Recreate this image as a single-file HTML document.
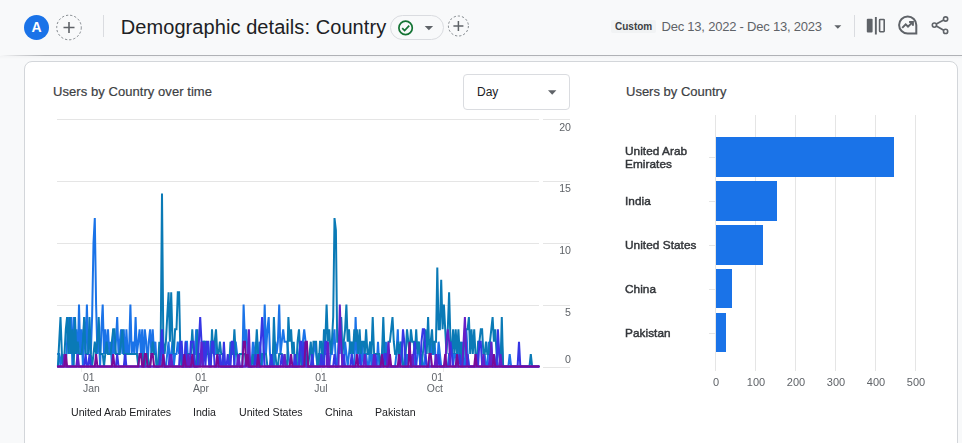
<!DOCTYPE html>
<html lang="en">
<head>
<meta charset="utf-8">
<title>Demographic details: Country</title>
<style>
html,body{margin:0;padding:0;}
body{width:962px;height:443px;overflow:hidden;background:#f8f9fa;font-family:"Liberation Sans",sans-serif;position:relative;color:#202124;}
.abs{position:absolute;white-space:nowrap;}
#hdr{position:absolute;left:0;top:0;width:962px;height:55px;background:#f8f9fa;}
#hdrline{position:absolute;left:0;top:55px;width:962px;height:1px;background:linear-gradient(to right,rgba(176,178,182,0) 0px,rgba(176,178,182,0.5) 20px,rgba(176,178,182,1) 45px);}
#hdrshadow{position:absolute;left:0;top:56px;width:962px;height:3px;background:linear-gradient(to bottom,rgba(60,64,67,0.03),rgba(60,64,67,0));}
#card{position:absolute;left:24px;top:61px;width:932px;height:420px;background:#fff;border:1px solid #d3d6da;border-radius:8px;}
#avatar{left:24px;top:15px;width:25px;height:25px;border-radius:50%;background:#1a73e8;color:#fff;font-weight:bold;font-size:14px;line-height:25px;text-align:center;}
.vdiv{position:absolute;width:1px;background:#dadce0;}
#title{left:120.8px;top:15px;font-size:20px;line-height:24px;color:#202124;letter-spacing:0.07px;}
#pill{left:390px;top:15px;width:52px;height:23px;border:1px solid #dadce0;border-radius:13px;}
#chip{left:611px;top:20px;width:45px;height:13px;background:#f1f3f4;border-radius:2px;}
#chiptxt{left:615px;top:20px;font-size:10px;line-height:13px;font-weight:bold;color:#3c4043;letter-spacing:0;}
#daterange{left:661.5px;top:18px;font-size:13px;line-height:18px;color:#5f6368;letter-spacing:-0.22px;}
.ctitle{font-size:13px;line-height:16px;color:#3c4043;-webkit-text-stroke:0.2px #3c4043;}
#ct1{left:53px;top:84px;letter-spacing:0.06px;}
#ct2{left:626px;top:84px;}
#dd{left:463px;top:74px;width:105px;height:34px;border:1px solid #dadce0;border-radius:4px;background:#fff;}
#ddtxt{left:477px;top:84px;font-size:12px;line-height:16px;color:#202124;}
.ylab{position:absolute;font-size:10.6px;line-height:12px;color:#5f6368;text-align:right;width:30px;left:540.7px;}
.xlab{position:absolute;font-size:10.4px;line-height:11.2px;color:#5f6368;white-space:nowrap;width:40px;}
.leg{position:absolute;font-size:10.6px;line-height:13px;color:#202124;top:406px;white-space:nowrap;}
.blab{position:absolute;font-size:11.8px;line-height:13px;font-weight:normal;-webkit-text-stroke:0.45px #33363a;letter-spacing:0.05px;color:#33363a;left:625.4px;white-space:nowrap;}
.bx{position:absolute;font-size:11px;line-height:12px;color:#5f6368;top:376px;width:40px;text-align:center;}
svg{position:absolute;left:0;top:0;overflow:visible;}
.ylab,.xlab,.leg,.blab,.bx{will-change:transform;}
</style>
</head>
<body>
<div id="hdr"></div>
<div id="hdrline"></div>
<div id="hdrshadow"></div>
<div id="card"></div>

<!-- header -->
<div id="avatar" class="abs">A</div>
<div class="vdiv" style="left:103px;top:15px;height:22px;"></div>
<div id="title" class="abs">Demographic details: Country</div>
<div id="pill" class="abs"></div>
<div id="chip" class="abs"></div>
<div id="chiptxt" class="abs">Custom</div>
<div id="daterange" class="abs">Dec 13, 2022 - Dec 13, 2023</div>
<div class="vdiv" style="left:854px;top:15px;height:22px;"></div>

<svg id="icons" width="962" height="60" viewBox="0 0 962 60">
  <!-- dashed plus 1 -->
  <circle cx="69" cy="27.5" r="12.3" fill="none" stroke="#80868b" stroke-width="1" stroke-dasharray="2.2 2"/>
  <path d="M63.5 27.5h11M69 22v11" stroke="#5f6368" stroke-width="1.6" fill="none"/>
  <!-- check -->
  <circle cx="405.6" cy="27.9" r="6.7" fill="none" stroke="#137333" stroke-width="1.7"/>
  <path d="M402.2 28.1l2.4 2.4l4.6-4.8" stroke="#137333" stroke-width="1.7" fill="none"/>
  <path d="M424.7 26h8.4l-4.2 4.2z" fill="#5f6368"/>
  <!-- dashed plus 2 -->
  <circle cx="458.4" cy="26" r="10" fill="none" stroke="#80868b" stroke-width="1" stroke-dasharray="2.2 2"/>
  <path d="M453.4 26h10M458.4 21v10" stroke="#5f6368" stroke-width="1.5" fill="none"/>
  <!-- date arrow -->
  <path d="M834.3 25.3h7l-3.5 3.5z" fill="#5f6368"/>
  <!-- compare icon -->
  <rect x="866.8" y="18.7" width="5.8" height="13.8" rx="1" fill="#5f6368"/>
  <rect x="874.9" y="17" width="1.9" height="17.5" fill="#5f6368"/>
  <rect x="879.6" y="19.5" width="4.6" height="12.2" rx="0.6" fill="none" stroke="#5f6368" stroke-width="1.6"/>
  <!-- insights icon -->
  <path d="M907.7 16.4a8.6 8.6 0 1 0 0 17.2h8.6v-8.6a8.6 8.6 0 0 0-8.6-8.6z" fill="none" stroke="#5f6368" stroke-width="2"/>
  <path d="M902.2 27.9l3.5-3.5l2.3 2.3l4.6-4.6M909.1 21.9h3.8v3.8" fill="none" stroke="#5f6368" stroke-width="2"/>
  <!-- share icon -->
  <path d="M936.3 24.1l7.4-4M936.3 26.1l7.4 4.2" stroke="#5f6368" stroke-width="1.7" fill="none"/>
  <circle cx="934.4" cy="25.1" r="2.1" fill="none" stroke="#5f6368" stroke-width="1.6"/>
  <circle cx="945.6" cy="19" r="2.1" fill="none" stroke="#5f6368" stroke-width="1.6"/>
  <circle cx="945.6" cy="31.4" r="2.1" fill="none" stroke="#5f6368" stroke-width="1.6"/>
</svg>

<!-- left card content -->
<div id="ct1" class="abs ctitle">Users by Country over time</div>
<div id="dd" class="abs"></div>
<div id="ddtxt" class="abs">Day</div>

<svg id="chart" width="962" height="443" viewBox="0 0 962 443">
  <path d="M548 90.3h8.4l-4.2 4.4z" fill="#5f6368"/>
  <g stroke="#e5e5e5" stroke-width="1" fill="none">
    <path d="M57 119.5H539M543 119.5H570"/>
    <path d="M57 181.5H539M543 181.5H570"/>
    <path d="M57 243.5H539M543 243.5H570"/>
    <path d="M57 305.5H539M543 305.5H570"/>
    <path d="M57 367.5H539M543 367.5H570"/>
    <path d="M81.5 368V372M201.5 368V372M321.5 368V372M443.5 368V372" stroke="#ececec"/>
  </g>
  <g id="series" fill="none" stroke-width="2" stroke-linejoin="miter" stroke-linecap="round">
    <path stroke="#1a73e8" d="M57.9 354.0L59.2 354.0L60.5 366.4L61.9 354.0L63.2 366.4L64.5 354.0L65.8 366.4L67.1 341.7L68.4 317.0L69.8 354.0L71.1 317.0L72.4 366.4L73.7 317.0L75.0 354.0L76.3 329.3L77.7 366.4L79.0 304.6L80.3 354.0L81.6 329.3L82.9 366.4L84.2 317.0L85.6 354.0L86.9 304.6L88.2 354.0L89.5 329.3L90.8 354.0L92.1 317.0L93.5 242.8L94.8 218.1L96.1 304.6L97.4 354.0L98.7 329.3L100.1 366.4L101.4 329.3L102.7 304.6L104.0 354.0L105.3 329.3L106.6 354.0L108.0 329.3L109.3 354.0L110.6 341.7L111.9 366.4L113.2 329.3L114.5 354.0L115.9 341.7L117.2 317.0L118.5 354.0L119.8 341.7L121.1 329.3L122.4 354.0L123.8 329.3L125.1 366.4L126.4 329.3L127.7 354.0L129.0 354.0L130.4 304.6L131.7 354.0L133.0 341.7L134.3 354.0L135.6 317.0L136.9 354.0L138.3 341.7L139.6 329.3L140.9 354.0L142.2 329.3L143.5 366.4L144.8 329.3L146.2 341.7L147.5 366.4L148.8 341.7L150.1 329.3L151.4 354.0L152.7 329.3L154.1 354.0L155.4 341.7L156.7 366.4L158.0 366.4L159.3 354.0L160.6 366.4L162.0 341.7L163.3 366.4L164.6 366.4L165.9 366.4L167.2 354.0L168.6 341.7L169.9 366.4L171.2 354.0L172.5 341.7L173.8 366.4L175.1 354.0L176.5 354.0L177.8 341.7L179.1 354.0L180.4 341.7L181.7 366.4L183.0 354.0L184.4 366.4L185.7 341.7L187.0 341.7L188.3 366.4L189.6 366.4L190.9 366.4L192.3 366.4L193.6 354.0L194.9 354.0L196.2 329.3L197.5 366.4L198.9 354.0L200.2 366.4L201.5 354.0L202.8 341.7L204.1 341.7L205.4 354.0L206.8 341.7L208.1 354.0L209.4 366.4L210.7 341.7L212.0 341.7L213.3 341.7L214.7 341.7L216.0 354.0L217.3 354.0L218.6 366.4L219.9 354.0L221.2 366.4L222.6 366.4L223.9 366.4L225.2 366.4L226.5 366.4L227.8 366.4L229.1 366.4L230.5 366.4L231.8 366.4L233.1 366.4L234.4 366.4L235.7 341.7L237.1 354.0L238.4 366.4L239.7 366.4L241.0 366.4L242.3 366.4L243.6 304.6L245.0 341.7L246.3 329.3L247.6 354.0L248.9 354.0L250.2 366.4L251.5 366.4L252.9 341.7L254.2 366.4L255.5 341.7L256.8 366.4L258.1 366.4L259.4 341.7L260.8 354.0L262.1 366.4L263.4 354.0L264.7 304.6L266.0 354.0L267.4 329.3L268.7 317.0L270.0 354.0L271.3 366.4L272.6 366.4L273.9 366.4L275.3 341.7L276.6 354.0L277.9 341.7L279.2 304.6L280.5 354.0L281.8 341.7L283.2 329.3L284.5 341.7L285.8 341.7L287.1 341.7L288.4 354.0L289.7 366.4L291.1 366.4L292.4 366.4L293.7 366.4L295.0 366.4L296.3 366.4L297.6 366.4L299.0 354.0L300.3 341.7L301.6 366.4L302.9 341.7L304.2 329.3L305.6 341.7L306.9 366.4L308.2 366.4L309.5 366.4L310.8 366.4L312.1 366.4L313.5 354.0L314.8 341.7L316.1 354.0L317.4 366.4L318.7 354.0L320.0 354.0L321.4 366.4L322.7 354.0L324.0 341.7L325.3 354.0L326.6 354.0L327.9 366.4L329.3 366.4L330.6 354.0L331.9 354.0L333.2 341.7L334.5 329.3L335.9 366.4L337.2 366.4L338.5 341.7L339.8 354.0L341.1 317.0L342.4 366.4L343.8 366.4L345.1 341.7L346.4 354.0L347.7 366.4L349.0 354.0L350.3 341.7L351.7 354.0L353.0 366.4L354.3 366.4L355.6 317.0L356.9 354.0L358.2 341.7L359.6 354.0L360.9 366.4L362.2 341.7L363.5 366.4L364.8 354.0L366.1 354.0L367.5 366.4L368.8 366.4L370.1 341.7L371.4 366.4L372.7 354.0L374.1 366.4L375.4 366.4L376.7 366.4L378.0 341.7L379.3 366.4L380.6 366.4L382.0 354.0L383.3 341.7L384.6 366.4L385.9 341.7L387.2 366.4L388.5 366.4L389.9 366.4L391.2 366.4L392.5 366.4L393.8 366.4L395.1 366.4L396.4 354.0L397.8 329.3L399.1 366.4L400.4 354.0L401.7 341.7L403.0 366.4L404.3 366.4L405.7 366.4L407.0 354.0L408.3 366.4L409.6 366.4L410.9 366.4L412.3 366.4L413.6 354.0L414.9 366.4L416.2 366.4L417.5 354.0L418.8 341.7L420.2 366.4L421.5 354.0L422.8 366.4L424.1 366.4L425.4 354.0L426.7 366.4L428.1 366.4L429.4 366.4L430.7 341.7L432.0 354.0L433.3 354.0L434.6 341.7L436.0 366.4L437.3 366.4L438.6 341.7L439.9 354.0L441.2 366.4L442.6 366.4L443.9 366.4L445.2 366.4L446.5 366.4L447.8 366.4L449.1 354.0L450.5 354.0L451.8 341.7L453.1 366.4L454.4 354.0L455.7 354.0L457.0 366.4L458.4 354.0L459.7 341.7L461.0 366.4L462.3 341.7L463.6 366.4L464.9 366.4L466.3 329.3L467.6 354.0L468.9 366.4L470.2 366.4L471.5 366.4L472.8 366.4L474.2 366.4L475.5 366.4L476.8 354.0L478.1 366.4L479.4 366.4L480.8 366.4L482.1 366.4L483.4 366.4L484.7 354.0L486.0 366.4L487.3 366.4L488.7 341.7L490.0 354.0L491.3 341.7L492.6 366.4L493.9 366.4L495.2 366.4L496.6 354.0L497.9 366.4L499.2 366.4L500.5 366.4L501.8 341.7L503.1 366.4L504.5 366.4L505.8 366.4L507.1 366.4L508.4 366.4L509.7 354.0L511.1 366.4L512.4 366.4L513.7 366.4L515.0 366.4L516.3 366.4L517.6 366.4L519.0 366.4L520.3 366.4L521.6 366.4L522.9 366.4L524.2 366.4L525.5 366.4L526.9 366.4L528.2 366.4L529.5 366.4L530.8 366.4L532.1 366.4L533.4 366.4L534.8 366.4L536.1 366.4L537.4 366.4L538.7 366.4"/>
    <path stroke="#0a7ab6" d="M57.9 366.4L59.2 341.7L60.5 317.0L61.9 354.0L63.2 366.4L64.5 354.0L65.8 329.3L67.1 317.0L68.4 354.0L69.8 317.0L71.1 354.0L72.4 329.3L73.7 366.4L75.0 317.0L76.3 354.0L77.7 341.7L79.0 354.0L80.3 354.0L81.6 354.0L82.9 341.7L84.2 317.0L85.6 354.0L86.9 354.0L88.2 354.0L89.5 317.0L90.8 354.0L92.1 366.4L93.5 354.0L94.8 341.7L96.1 354.0L97.4 341.7L98.7 317.0L100.1 354.0L101.4 354.0L102.7 354.0L104.0 366.4L105.3 354.0L106.6 341.7L108.0 354.0L109.3 354.0L110.6 354.0L111.9 341.7L113.2 329.3L114.5 329.3L115.9 354.0L117.2 354.0L118.5 354.0L119.8 354.0L121.1 341.7L122.4 329.3L123.8 354.0L125.1 354.0L126.4 354.0L127.7 354.0L129.0 354.0L130.4 354.0L131.7 354.0L133.0 354.0L134.3 354.0L135.6 354.0L136.9 354.0L138.3 366.4L139.6 354.0L140.9 354.0L142.2 354.0L143.5 366.4L144.8 366.4L146.2 354.0L147.5 354.0L148.8 366.4L150.1 366.4L151.4 354.0L152.7 341.7L154.1 354.0L155.4 354.0L156.7 366.4L158.0 366.4L159.3 341.7L160.6 354.0L162.0 193.4L163.3 341.7L164.6 354.0L165.9 341.7L167.2 317.0L168.6 292.2L169.9 341.7L171.2 292.2L172.5 341.7L173.8 354.0L175.1 329.3L176.5 329.3L177.8 292.2L179.1 292.2L180.4 354.0L181.7 366.4L183.0 366.4L184.4 366.4L185.7 366.4L187.0 354.0L188.3 354.0L189.6 354.0L190.9 354.0L192.3 329.3L193.6 354.0L194.9 366.4L196.2 366.4L197.5 329.3L198.9 366.4L200.2 354.0L201.5 354.0L202.8 366.4L204.1 341.7L205.4 341.7L206.8 354.0L208.1 354.0L209.4 354.0L210.7 366.4L212.0 329.3L213.3 354.0L214.7 341.7L216.0 329.3L217.3 354.0L218.6 354.0L219.9 341.7L221.2 354.0L222.6 354.0L223.9 366.4L225.2 366.4L226.5 366.4L227.8 366.4L229.1 366.4L230.5 341.7L231.8 354.0L233.1 354.0L234.4 329.3L235.7 354.0L237.1 354.0L238.4 366.4L239.7 354.0L241.0 354.0L242.3 354.0L243.6 354.0L245.0 354.0L246.3 366.4L247.6 354.0L248.9 366.4L250.2 366.4L251.5 366.4L252.9 354.0L254.2 366.4L255.5 354.0L256.8 329.3L258.1 354.0L259.4 366.4L260.8 366.4L262.1 354.0L263.4 354.0L264.7 354.0L266.0 354.0L267.4 366.4L268.7 366.4L270.0 366.4L271.3 354.0L272.6 366.4L273.9 317.0L275.3 354.0L276.6 366.4L277.9 366.4L279.2 354.0L280.5 354.0L281.8 354.0L283.2 366.4L284.5 354.0L285.8 366.4L287.1 366.4L288.4 317.0L289.7 341.7L291.1 329.3L292.4 354.0L293.7 341.7L295.0 366.4L296.3 366.4L297.6 341.7L299.0 329.3L300.3 354.0L301.6 366.4L302.9 366.4L304.2 341.7L305.6 366.4L306.9 354.0L308.2 366.4L309.5 354.0L310.8 341.7L312.1 366.4L313.5 341.7L314.8 341.7L316.1 341.7L317.4 366.4L318.7 366.4L320.0 341.7L321.4 341.7L322.7 366.4L324.0 329.3L325.3 341.7L326.6 304.6L327.9 341.7L329.3 329.3L330.6 354.0L331.9 341.7L333.2 317.0L334.5 218.1L335.9 230.4L337.2 341.7L338.5 341.7L339.8 329.3L341.1 317.0L342.4 354.0L343.8 341.7L345.1 329.3L346.4 304.6L347.7 341.7L349.0 329.3L350.3 354.0L351.7 341.7L353.0 354.0L354.3 329.3L355.6 341.7L356.9 329.3L358.2 354.0L359.6 329.3L360.9 354.0L362.2 341.7L363.5 341.7L364.8 354.0L366.1 329.3L367.5 354.0L368.8 354.0L370.1 341.7L371.4 354.0L372.7 317.0L374.1 354.0L375.4 354.0L376.7 354.0L378.0 354.0L379.3 354.0L380.6 366.4L382.0 354.0L383.3 317.0L384.6 354.0L385.9 366.4L387.2 354.0L388.5 341.7L389.9 341.7L391.2 329.3L392.5 317.0L393.8 341.7L395.1 354.0L396.4 354.0L397.8 341.7L399.1 354.0L400.4 341.7L401.7 354.0L403.0 366.4L404.3 366.4L405.7 354.0L407.0 329.3L408.3 341.7L409.6 354.0L410.9 329.3L412.3 341.7L413.6 341.7L414.9 354.0L416.2 329.3L417.5 354.0L418.8 341.7L420.2 354.0L421.5 366.4L422.8 354.0L424.1 341.7L425.4 329.3L426.7 354.0L428.1 317.0L429.4 354.0L430.7 341.7L432.0 329.3L433.3 354.0L434.6 341.7L436.0 341.7L437.3 267.5L438.6 329.3L439.9 329.3L441.2 279.9L442.6 329.3L443.9 304.6L445.2 329.3L446.5 354.0L447.8 329.3L449.1 292.2L450.5 341.7L451.8 354.0L453.1 329.3L454.4 354.0L455.7 329.3L457.0 354.0L458.4 329.3L459.7 354.0L461.0 341.7L462.3 366.4L463.6 354.0L464.9 329.3L466.3 329.3L467.6 329.3L468.9 317.0L470.2 354.0L471.5 329.3L472.8 354.0L474.2 329.3L475.5 354.0L476.8 366.4L478.1 341.7L479.4 341.7L480.8 329.3L482.1 329.3L483.4 354.0L484.7 354.0L486.0 341.7L487.3 354.0L488.7 354.0L490.0 341.7L491.3 329.3L492.6 317.0L493.9 341.7L495.2 329.3L496.6 354.0L497.9 341.7L499.2 354.0L500.5 366.4L501.8 317.0L503.1 366.4L504.5 366.4L505.8 366.4L507.1 366.4L508.4 366.4L509.7 366.4L511.1 366.4L512.4 366.4L513.7 366.4L515.0 366.4L516.3 366.4L517.6 366.4L519.0 366.4L520.3 366.4L521.6 366.4L522.9 366.4L524.2 366.4L525.5 366.4L526.9 366.4L528.2 366.4L529.5 366.4L530.8 354.0L532.1 366.4L533.4 366.4L534.8 366.4L536.1 366.4L537.4 366.4L538.7 366.4"/>
    <path stroke="#3636e4" d="M57.9 366.4L59.2 366.4L60.5 366.4L61.9 366.4L63.2 366.4L64.5 366.4L65.8 366.4L67.1 366.4L68.4 366.4L69.8 366.4L71.1 366.4L72.4 366.4L73.7 366.4L75.0 366.4L76.3 366.4L77.7 366.4L79.0 366.4L80.3 366.4L81.6 366.4L82.9 366.4L84.2 366.4L85.6 354.0L86.9 366.4L88.2 366.4L89.5 354.0L90.8 366.4L92.1 366.4L93.5 366.4L94.8 366.4L96.1 366.4L97.4 366.4L98.7 366.4L100.1 366.4L101.4 366.4L102.7 366.4L104.0 366.4L105.3 366.4L106.6 366.4L108.0 366.4L109.3 366.4L110.6 366.4L111.9 366.4L113.2 366.4L114.5 366.4L115.9 366.4L117.2 354.0L118.5 366.4L119.8 366.4L121.1 366.4L122.4 366.4L123.8 366.4L125.1 354.0L126.4 366.4L127.7 366.4L129.0 366.4L130.4 366.4L131.7 366.4L133.0 366.4L134.3 366.4L135.6 366.4L136.9 366.4L138.3 366.4L139.6 366.4L140.9 366.4L142.2 366.4L143.5 366.4L144.8 366.4L146.2 366.4L147.5 366.4L148.8 366.4L150.1 366.4L151.4 366.4L152.7 366.4L154.1 366.4L155.4 366.4L156.7 366.4L158.0 366.4L159.3 366.4L160.6 354.0L162.0 329.3L163.3 354.0L164.6 366.4L165.9 366.4L167.2 366.4L168.6 366.4L169.9 354.0L171.2 366.4L172.5 366.4L173.8 366.4L175.1 366.4L176.5 366.4L177.8 366.4L179.1 366.4L180.4 341.7L181.7 341.7L183.0 366.4L184.4 366.4L185.7 341.7L187.0 366.4L188.3 366.4L189.6 366.4L190.9 341.7L192.3 341.7L193.6 341.7L194.9 366.4L196.2 366.4L197.5 366.4L198.9 341.7L200.2 317.0L201.5 341.7L202.8 366.4L204.1 341.7L205.4 366.4L206.8 341.7L208.1 341.7L209.4 366.4L210.7 366.4L212.0 341.7L213.3 341.7L214.7 366.4L216.0 366.4L217.3 366.4L218.6 366.4L219.9 354.0L221.2 366.4L222.6 366.4L223.9 341.7L225.2 366.4L226.5 366.4L227.8 354.0L229.1 366.4L230.5 366.4L231.8 341.7L233.1 341.7L234.4 366.4L235.7 366.4L237.1 366.4L238.4 354.0L239.7 366.4L241.0 366.4L242.3 366.4L243.6 366.4L245.0 366.4L246.3 354.0L247.6 366.4L248.9 366.4L250.2 366.4L251.5 366.4L252.9 366.4L254.2 366.4L255.5 354.0L256.8 366.4L258.1 366.4L259.4 366.4L260.8 341.7L262.1 317.0L263.4 341.7L264.7 366.4L266.0 366.4L267.4 366.4L268.7 366.4L270.0 366.4L271.3 354.0L272.6 366.4L273.9 366.4L275.3 366.4L276.6 366.4L277.9 366.4L279.2 366.4L280.5 366.4L281.8 354.0L283.2 366.4L284.5 366.4L285.8 366.4L287.1 366.4L288.4 366.4L289.7 366.4L291.1 366.4L292.4 366.4L293.7 366.4L295.0 354.0L296.3 366.4L297.6 366.4L299.0 366.4L300.3 341.7L301.6 341.7L302.9 366.4L304.2 341.7L305.6 366.4L306.9 366.4L308.2 366.4L309.5 366.4L310.8 366.4L312.1 354.0L313.5 366.4L314.8 366.4L316.1 366.4L317.4 366.4L318.7 366.4L320.0 366.4L321.4 354.0L322.7 366.4L324.0 366.4L325.3 341.7L326.6 341.7L327.9 366.4L329.3 366.4L330.6 366.4L331.9 366.4L333.2 366.4L334.5 354.0L335.9 366.4L337.2 366.4L338.5 366.4L339.8 366.4L341.1 366.4L342.4 366.4L343.8 354.0L345.1 366.4L346.4 366.4L347.7 366.4L349.0 366.4L350.3 366.4L351.7 354.0L353.0 366.4L354.3 366.4L355.6 366.4L356.9 366.4L358.2 366.4L359.6 354.0L360.9 366.4L362.2 366.4L363.5 366.4L364.8 366.4L366.1 366.4L367.5 366.4L368.8 366.4L370.1 366.4L371.4 366.4L372.7 366.4L374.1 366.4L375.4 354.0L376.7 366.4L378.0 366.4L379.3 366.4L380.6 366.4L382.0 366.4L383.3 366.4L384.6 354.0L385.9 354.0L387.2 366.4L388.5 366.4L389.9 366.4L391.2 366.4L392.5 366.4L393.8 366.4L395.1 366.4L396.4 366.4L397.8 366.4L399.1 366.4L400.4 366.4L401.7 354.0L403.0 329.3L404.3 341.7L405.7 366.4L407.0 366.4L408.3 366.4L409.6 366.4L410.9 366.4L412.3 366.4L413.6 354.0L414.9 341.7L416.2 366.4L417.5 366.4L418.8 366.4L420.2 366.4L421.5 341.7L422.8 329.3L424.1 329.3L425.4 354.0L426.7 366.4L428.1 366.4L429.4 366.4L430.7 366.4L432.0 366.4L433.3 366.4L434.6 366.4L436.0 366.4L437.3 366.4L438.6 354.0L439.9 366.4L441.2 366.4L442.6 366.4L443.9 366.4L445.2 366.4L446.5 366.4L447.8 366.4L449.1 366.4L450.5 341.7L451.8 354.0L453.1 366.4L454.4 366.4L455.7 366.4L457.0 366.4L458.4 366.4L459.7 354.0L461.0 366.4L462.3 366.4L463.6 366.4L464.9 366.4L466.3 366.4L467.6 354.0L468.9 366.4L470.2 366.4L471.5 366.4L472.8 366.4L474.2 366.4L475.5 366.4L476.8 354.0L478.1 366.4L479.4 341.7L480.8 341.7L482.1 366.4L483.4 366.4L484.7 366.4L486.0 366.4L487.3 366.4L488.7 366.4L490.0 354.0L491.3 366.4L492.6 366.4L493.9 366.4L495.2 366.4L496.6 366.4L497.9 329.3L499.2 354.0L500.5 366.4L501.8 366.4L503.1 366.4L504.5 366.4L505.8 366.4L507.1 366.4L508.4 366.4L509.7 366.4L511.1 366.4L512.4 366.4L513.7 366.4L515.0 366.4L516.3 366.4L517.6 366.4L519.0 341.7L520.3 366.4L521.6 366.4L522.9 366.4L524.2 366.4L525.5 366.4L526.9 366.4L528.2 366.4L529.5 366.4L530.8 366.4L532.1 366.4L533.4 366.4L534.8 366.4L536.1 366.4L537.4 366.4L538.7 366.4"/>
    <path stroke="#661fc8" d="M57.9 366.4L59.2 366.4L60.5 366.4L61.9 366.4L63.2 366.4L64.5 354.0L65.8 366.4L67.1 366.4L68.4 366.4L69.8 366.4L71.1 366.4L72.4 366.4L73.7 366.4L75.0 366.4L76.3 366.4L77.7 354.0L79.0 366.4L80.3 366.4L81.6 366.4L82.9 366.4L84.2 366.4L85.6 366.4L86.9 366.4L88.2 366.4L89.5 366.4L90.8 366.4L92.1 366.4L93.5 366.4L94.8 366.4L96.1 366.4L97.4 366.4L98.7 366.4L100.1 366.4L101.4 366.4L102.7 366.4L104.0 366.4L105.3 366.4L106.6 366.4L108.0 366.4L109.3 366.4L110.6 366.4L111.9 366.4L113.2 366.4L114.5 366.4L115.9 366.4L117.2 366.4L118.5 366.4L119.8 366.4L121.1 366.4L122.4 366.4L123.8 366.4L125.1 366.4L126.4 366.4L127.7 366.4L129.0 366.4L130.4 366.4L131.7 366.4L133.0 366.4L134.3 366.4L135.6 366.4L136.9 366.4L138.3 366.4L139.6 366.4L140.9 366.4L142.2 366.4L143.5 366.4L144.8 366.4L146.2 366.4L147.5 366.4L148.8 366.4L150.1 366.4L151.4 366.4L152.7 366.4L154.1 366.4L155.4 366.4L156.7 366.4L158.0 366.4L159.3 366.4L160.6 366.4L162.0 366.4L163.3 366.4L164.6 366.4L165.9 366.4L167.2 366.4L168.6 366.4L169.9 366.4L171.2 354.0L172.5 366.4L173.8 366.4L175.1 366.4L176.5 366.4L177.8 366.4L179.1 366.4L180.4 366.4L181.7 366.4L183.0 366.4L184.4 366.4L185.7 366.4L187.0 366.4L188.3 354.0L189.6 366.4L190.9 366.4L192.3 366.4L193.6 366.4L194.9 366.4L196.2 366.4L197.5 366.4L198.9 366.4L200.2 366.4L201.5 341.7L202.8 366.4L204.1 366.4L205.4 366.4L206.8 366.4L208.1 366.4L209.4 366.4L210.7 366.4L212.0 366.4L213.3 366.4L214.7 366.4L216.0 366.4L217.3 366.4L218.6 366.4L219.9 366.4L221.2 366.4L222.6 366.4L223.9 366.4L225.2 366.4L226.5 366.4L227.8 366.4L229.1 366.4L230.5 366.4L231.8 366.4L233.1 366.4L234.4 366.4L235.7 366.4L237.1 366.4L238.4 354.0L239.7 366.4L241.0 366.4L242.3 366.4L243.6 366.4L245.0 366.4L246.3 366.4L247.6 366.4L248.9 329.3L250.2 366.4L251.5 366.4L252.9 366.4L254.2 366.4L255.5 366.4L256.8 366.4L258.1 366.4L259.4 366.4L260.8 366.4L262.1 366.4L263.4 366.4L264.7 366.4L266.0 366.4L267.4 366.4L268.7 366.4L270.0 366.4L271.3 366.4L272.6 366.4L273.9 366.4L275.3 366.4L276.6 366.4L277.9 366.4L279.2 366.4L280.5 366.4L281.8 366.4L283.2 366.4L284.5 354.0L285.8 366.4L287.1 366.4L288.4 366.4L289.7 366.4L291.1 366.4L292.4 366.4L293.7 366.4L295.0 366.4L296.3 366.4L297.6 366.4L299.0 366.4L300.3 366.4L301.6 366.4L302.9 366.4L304.2 366.4L305.6 366.4L306.9 366.4L308.2 366.4L309.5 366.4L310.8 366.4L312.1 366.4L313.5 366.4L314.8 366.4L316.1 366.4L317.4 366.4L318.7 366.4L320.0 366.4L321.4 366.4L322.7 366.4L324.0 366.4L325.3 366.4L326.6 366.4L327.9 341.7L329.3 366.4L330.6 366.4L331.9 366.4L333.2 366.4L334.5 366.4L335.9 366.4L337.2 366.4L338.5 366.4L339.8 304.6L341.1 341.7L342.4 366.4L343.8 366.4L345.1 366.4L346.4 366.4L347.7 366.4L349.0 366.4L350.3 366.4L351.7 366.4L353.0 366.4L354.3 366.4L355.6 366.4L356.9 366.4L358.2 366.4L359.6 366.4L360.9 366.4L362.2 366.4L363.5 366.4L364.8 354.0L366.1 366.4L367.5 366.4L368.8 366.4L370.1 366.4L371.4 366.4L372.7 366.4L374.1 354.0L375.4 366.4L376.7 366.4L378.0 366.4L379.3 366.4L380.6 366.4L382.0 366.4L383.3 366.4L384.6 366.4L385.9 366.4L387.2 366.4L388.5 341.7L389.9 366.4L391.2 366.4L392.5 366.4L393.8 366.4L395.1 366.4L396.4 366.4L397.8 366.4L399.1 366.4L400.4 366.4L401.7 366.4L403.0 366.4L404.3 366.4L405.7 366.4L407.0 366.4L408.3 366.4L409.6 366.4L410.9 366.4L412.3 354.0L413.6 366.4L414.9 366.4L416.2 366.4L417.5 366.4L418.8 366.4L420.2 366.4L421.5 366.4L422.8 366.4L424.1 366.4L425.4 366.4L426.7 366.4L428.1 366.4L429.4 366.4L430.7 366.4L432.0 366.4L433.3 366.4L434.6 366.4L436.0 354.0L437.3 366.4L438.6 366.4L439.9 366.4L441.2 366.4L442.6 366.4L443.9 366.4L445.2 366.4L446.5 341.7L447.8 329.3L449.1 341.7L450.5 366.4L451.8 366.4L453.1 366.4L454.4 366.4L455.7 366.4L457.0 366.4L458.4 366.4L459.7 366.4L461.0 366.4L462.3 366.4L463.6 341.7L464.9 317.0L466.3 354.0L467.6 366.4L468.9 366.4L470.2 366.4L471.5 366.4L472.8 366.4L474.2 366.4L475.5 366.4L476.8 366.4L478.1 366.4L479.4 366.4L480.8 366.4L482.1 366.4L483.4 354.0L484.7 366.4L486.0 366.4L487.3 366.4L488.7 366.4L490.0 366.4L491.3 341.7L492.6 366.4L493.9 366.4L495.2 366.4L496.6 366.4L497.9 366.4L499.2 366.4L500.5 354.0L501.8 366.4L503.1 366.4L504.5 366.4L505.8 366.4L507.1 366.4L508.4 366.4L509.7 366.4L511.1 366.4L512.4 366.4L513.7 366.4L515.0 366.4L516.3 366.4L517.6 366.4L519.0 366.4L520.3 366.4L521.6 366.4L522.9 366.4L524.2 366.4L525.5 366.4L526.9 366.4L528.2 366.4L529.5 366.4L530.8 366.4L532.1 366.4L533.4 366.4L534.8 366.4L536.1 366.4L537.4 366.4L538.7 366.4"/>
    <path stroke="#7b0a96" d="M57.9 366.4L59.2 366.4L60.5 366.4L61.9 366.4L63.2 366.4L64.5 366.4L65.8 354.0L67.1 366.4L68.4 366.4L69.8 366.4L71.1 366.4L72.4 366.4L73.7 366.4L75.0 366.4L76.3 366.4L77.7 366.4L79.0 366.4L80.3 366.4L81.6 366.4L82.9 366.4L84.2 366.4L85.6 366.4L86.9 366.4L88.2 366.4L89.5 366.4L90.8 366.4L92.1 366.4L93.5 366.4L94.8 366.4L96.1 354.0L97.4 366.4L98.7 366.4L100.1 366.4L101.4 366.4L102.7 366.4L104.0 366.4L105.3 366.4L106.6 366.4L108.0 366.4L109.3 366.4L110.6 366.4L111.9 366.4L113.2 354.0L114.5 366.4L115.9 366.4L117.2 366.4L118.5 366.4L119.8 366.4L121.1 366.4L122.4 366.4L123.8 366.4L125.1 366.4L126.4 366.4L127.7 366.4L129.0 366.4L130.4 366.4L131.7 366.4L133.0 366.4L134.3 366.4L135.6 366.4L136.9 366.4L138.3 366.4L139.6 354.0L140.9 354.0L142.2 366.4L143.5 366.4L144.8 354.0L146.2 354.0L147.5 366.4L148.8 366.4L150.1 366.4L151.4 354.0L152.7 354.0L154.1 366.4L155.4 366.4L156.7 366.4L158.0 366.4L159.3 366.4L160.6 366.4L162.0 366.4L163.3 354.0L164.6 366.4L165.9 366.4L167.2 366.4L168.6 366.4L169.9 366.4L171.2 366.4L172.5 366.4L173.8 366.4L175.1 366.4L176.5 366.4L177.8 366.4L179.1 366.4L180.4 366.4L181.7 366.4L183.0 366.4L184.4 354.0L185.7 366.4L187.0 366.4L188.3 366.4L189.6 366.4L190.9 366.4L192.3 354.0L193.6 366.4L194.9 366.4L196.2 366.4L197.5 366.4L198.9 366.4L200.2 366.4L201.5 366.4L202.8 366.4L204.1 366.4L205.4 366.4L206.8 366.4L208.1 366.4L209.4 366.4L210.7 366.4L212.0 366.4L213.3 366.4L214.7 366.4L216.0 366.4L217.3 354.0L218.6 366.4L219.9 366.4L221.2 366.4L222.6 366.4L223.9 366.4L225.2 366.4L226.5 366.4L227.8 366.4L229.1 366.4L230.5 366.4L231.8 366.4L233.1 366.4L234.4 366.4L235.7 366.4L237.1 366.4L238.4 366.4L239.7 366.4L241.0 366.4L242.3 366.4L243.6 341.7L245.0 341.7L246.3 366.4L247.6 354.0L248.9 366.4L250.2 366.4L251.5 366.4L252.9 366.4L254.2 366.4L255.5 366.4L256.8 366.4L258.1 354.0L259.4 366.4L260.8 366.4L262.1 366.4L263.4 366.4L264.7 366.4L266.0 366.4L267.4 366.4L268.7 366.4L270.0 366.4L271.3 366.4L272.6 366.4L273.9 366.4L275.3 366.4L276.6 366.4L277.9 366.4L279.2 366.4L280.5 366.4L281.8 366.4L283.2 366.4L284.5 366.4L285.8 366.4L287.1 366.4L288.4 366.4L289.7 366.4L291.1 354.0L292.4 366.4L293.7 366.4L295.0 366.4L296.3 366.4L297.6 366.4L299.0 366.4L300.3 366.4L301.6 366.4L302.9 366.4L304.2 366.4L305.6 341.7L306.9 341.7L308.2 366.4L309.5 366.4L310.8 366.4L312.1 366.4L313.5 366.4L314.8 366.4L316.1 366.4L317.4 366.4L318.7 366.4L320.0 366.4L321.4 366.4L322.7 366.4L324.0 366.4L325.3 366.4L326.6 366.4L327.9 366.4L329.3 366.4L330.6 366.4L331.9 366.4L333.2 366.4L334.5 366.4L335.9 366.4L337.2 366.4L338.5 366.4L339.8 366.4L341.1 366.4L342.4 366.4L343.8 366.4L345.1 366.4L346.4 366.4L347.7 366.4L349.0 366.4L350.3 366.4L351.7 366.4L353.0 366.4L354.3 366.4L355.6 366.4L356.9 354.0L358.2 366.4L359.6 366.4L360.9 366.4L362.2 366.4L363.5 366.4L364.8 366.4L366.1 366.4L367.5 366.4L368.8 366.4L370.1 366.4L371.4 366.4L372.7 366.4L374.1 366.4L375.4 366.4L376.7 366.4L378.0 366.4L379.3 366.4L380.6 366.4L382.0 354.0L383.3 366.4L384.6 366.4L385.9 366.4L387.2 366.4L388.5 366.4L389.9 354.0L391.2 366.4L392.5 366.4L393.8 366.4L395.1 366.4L396.4 366.4L397.8 366.4L399.1 354.0L400.4 366.4L401.7 366.4L403.0 366.4L404.3 366.4L405.7 366.4L407.0 366.4L408.3 366.4L409.6 341.7L410.9 366.4L412.3 366.4L413.6 366.4L414.9 366.4L416.2 366.4L417.5 366.4L418.8 366.4L420.2 366.4L421.5 366.4L422.8 366.4L424.1 366.4L425.4 366.4L426.7 366.4L428.1 366.4L429.4 354.0L430.7 354.0L432.0 366.4L433.3 366.4L434.6 366.4L436.0 366.4L437.3 366.4L438.6 366.4L439.9 366.4L441.2 366.4L442.6 366.4L443.9 366.4L445.2 354.0L446.5 366.4L447.8 366.4L449.1 366.4L450.5 366.4L451.8 366.4L453.1 366.4L454.4 366.4L455.7 366.4L457.0 354.0L458.4 366.4L459.7 366.4L461.0 366.4L462.3 366.4L463.6 366.4L464.9 366.4L466.3 366.4L467.6 366.4L468.9 366.4L470.2 366.4L471.5 366.4L472.8 366.4L474.2 366.4L475.5 354.0L476.8 366.4L478.1 366.4L479.4 366.4L480.8 366.4L482.1 366.4L483.4 366.4L484.7 366.4L486.0 366.4L487.3 366.4L488.7 366.4L490.0 366.4L491.3 366.4L492.6 366.4L493.9 354.0L495.2 366.4L496.6 366.4L497.9 366.4L499.2 366.4L500.5 366.4L501.8 366.4L503.1 366.4L504.5 366.4L505.8 366.4L507.1 366.4L508.4 366.4L509.7 366.4L511.1 366.4L512.4 366.4L513.7 366.4L515.0 366.4L516.3 366.4L517.6 366.4L519.0 366.4L520.3 366.4L521.6 366.4L522.9 366.4L524.2 366.4L525.5 366.4L526.9 366.4L528.2 366.4L529.5 366.4L530.8 366.4L532.1 366.4L533.4 366.4L534.8 366.4L536.1 366.4L537.4 366.4L538.7 366.4"/>
  </g>
</svg>
<div class="ylab" id="y20" style="top:121px;">20</div>
<div class="ylab" id="y15" style="top:182px;">15</div>
<div class="ylab" id="y10" style="top:244px;">10</div>
<div class="ylab" id="y5" style="top:306px;">5</div>
<div class="ylab" id="y0" style="top:353px;">0</div>

<div class="xlab" id="xj" style="left:83px;top:371.5px;text-align:left;">01<br>Jan</div>
<div class="xlab" id="xa" style="left:181.2px;top:371.5px;text-align:center;">01<br>Apr</div>
<div class="xlab" id="xl" style="left:301.2px;top:371.5px;text-align:center;">01<br>Jul</div>
<div class="xlab" id="xo" style="left:403px;top:371.5px;text-align:right;">01<br>Oct</div>

<div class="leg" id="l1" style="left:71px;">United Arab Emirates</div>
<div class="leg" id="l2" style="left:193.3px;">India</div>
<div class="leg" id="l3" style="left:239px;">United States</div>
<div class="leg" id="l4" style="left:325px;">China</div>
<div class="leg" id="l5" style="left:375px;">Pakistan</div>

<!-- right card content -->
<div id="ct2" class="abs ctitle">Users by Country</div>
<svg id="bars" width="962" height="443" viewBox="0 0 962 443">
  <g stroke="#e5e5e5" stroke-width="1">
    <path d="M715.5 115V371M755.5 115V371M795.5 115V371M835.5 115V371M875.5 115V371M915.5 115V371"/>
    <path d="M709 157.5H716M709 201.5H716M709 245.5H716M709 289.5H716M709 333.5H716"/>
  </g>
  <g fill="#1a73e8">
    <rect x="716" y="137" width="178" height="40"/>
    <rect x="716" y="181" width="61" height="40"/>
    <rect x="716" y="225" width="47" height="40"/>
    <rect x="716" y="269" width="16" height="39"/>
    <rect x="716" y="313" width="10" height="39"/>
  </g>
</svg>
<div class="blab" id="b1" style="top:144.5px;">United Arab<br>Emirates</div>
<div class="blab" id="b2" style="top:194.5px;">India</div>
<div class="blab" id="b3" style="top:238.5px;">United States</div>
<div class="blab" id="b4" style="top:282.5px;">China</div>
<div class="blab" id="b5" style="top:326.5px;">Pakistan</div>
<div class="bx" id="bx0" style="left:696px;">0</div>
<div class="bx" id="bx1" style="left:736px;">100</div>
<div class="bx" id="bx2" style="left:776px;">200</div>
<div class="bx" id="bx3" style="left:816px;">300</div>
<div class="bx" id="bx4" style="left:856px;">400</div>
<div class="bx" id="bx5" style="left:896px;">500</div>
</body>
</html>
